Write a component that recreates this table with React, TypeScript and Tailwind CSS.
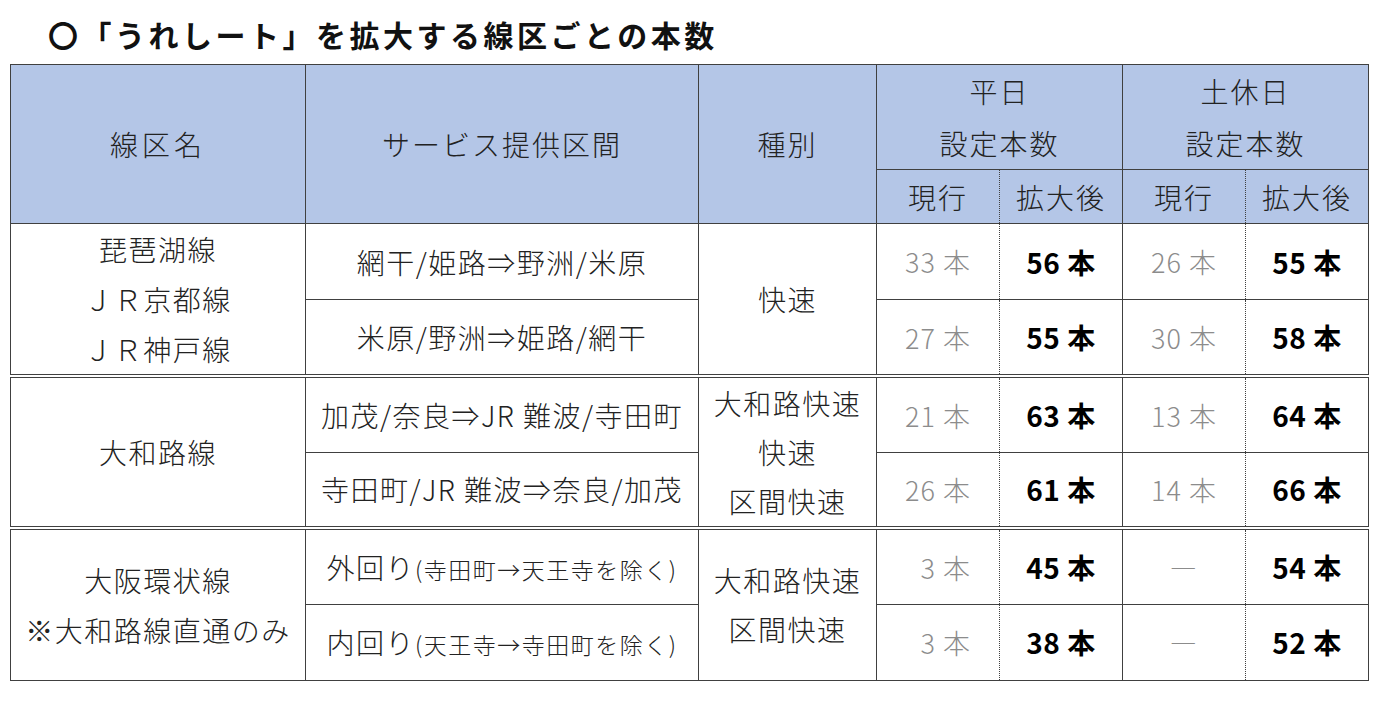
const font = "font-['Noto_Sans_CJK_JP','Noto_Sans',sans-serif]";

const cell = "border border-[#404040] text-center align-middle p-0";
const head = `${cell} bg-[#b4c6e7] font-light text-[#222] text-[28px] tracking-[2px]`;
const body = `${cell} font-light text-[#222] text-[28px] tracking-[1.5px]`;
const dblTop = "border-t-4 [border-top-style:double]";
const dotR = "[border-right-style:dotted]";
const dotL = "[border-left-style:dotted]";

function Now({ v }: { v: string }) {
	const pad = v.length === 1;
	return (
		<span className="text-[#8c8c8c] font-light text-[27px] tracking-[1px]">
			{pad && <span className="invisible">0</span>}
			{v} 本
		</span>
	);
}

function After({ v }: { v: string }) {
	return <span className="text-black font-bold text-[28px] tracking-[0.5px]">{v} 本</span>;
}

function Dash() {
	return <span className="text-[#8c8c8c] font-light text-[27px]">―</span>;
}

type Row = {
	route: React.ReactNode;
	wdNow: React.ReactNode;
	wdAfter: string;
	hdNow: React.ReactNode;
	hdAfter: string;
};

type Group = {
	line: React.ReactNode;
	kind: React.ReactNode;
	rows: [Row, Row];
};

const groups: Group[] = [
	{
		line: (
			<>
				琵琶湖線
				<br />
				ＪＲ京都線
				<br />
				ＪＲ神戸線
			</>
		),
		kind: "快速",
		rows: [
			{ route: "網干/姫路⇒野洲/米原", wdNow: <Now v="33" />, wdAfter: "56", hdNow: <Now v="26" />, hdAfter: "55" },
			{ route: "米原/野洲⇒姫路/網干", wdNow: <Now v="27" />, wdAfter: "55", hdNow: <Now v="30" />, hdAfter: "58" },
		],
	},
	{
		line: "大和路線",
		kind: (
			<>
				大和路快速
				<br />
				快速
				<br />
				区間快速
			</>
		),
		rows: [
			{ route: "加茂/奈良⇒JR 難波/寺田町", wdNow: <Now v="21" />, wdAfter: "63", hdNow: <Now v="13" />, hdAfter: "64" },
			{ route: "寺田町/JR 難波⇒奈良/加茂", wdNow: <Now v="26" />, wdAfter: "61", hdNow: <Now v="14" />, hdAfter: "66" },
		],
	},
	{
		line: (
			<>
				大阪環状線
				<br />
				※大和路線直通のみ
			</>
		),
		kind: (
			<>
				大和路快速
				<br />
				区間快速
			</>
		),
		rows: [
			{
				route: (
					<>
						外回り<span className="text-[23px] tracking-[1.5px]">(寺田町→天王寺を除く)</span>
					</>
				),
				wdNow: <Now v="3" />,
				wdAfter: "45",
				hdNow: <Dash />,
				hdAfter: "54",
			},
			{
				route: (
					<>
						内回り<span className="text-[23px] tracking-[1.5px]">(天王寺→寺田町を除く)</span>
					</>
				),
				wdNow: <Now v="3" />,
				wdAfter: "38",
				hdNow: <Dash />,
				hdAfter: "52",
			},
		],
	},
];

export default function App() {
	return (
		<div className={`${font} w-[1380px] h-[705px] bg-white`}>
			<h1 className="pt-[14px] pl-[48px] h-[64px] text-[30px] leading-[40px] font-bold tracking-[3.5px] text-[#111]">
				〇「うれしート」を拡大する線区ごとの本数
			</h1>

			<table className="ml-[10px] w-[1358px] table-fixed border-collapse">
				<colgroup>
					<col className="w-[295px]" />
					<col className="w-[393px]" />
					<col className="w-[178px]" />
					<col className="w-[123px]" />
					<col className="w-[123px]" />
					<col className="w-[123px]" />
					<col className="w-[123px]" />
				</colgroup>
				<thead>
					<tr className="h-[104px]">
						<th rowSpan={2} className={`${head} tracking-[4px]`}>
							線区名
						</th>
						<th rowSpan={2} className={head}>
							サービス提供区間
						</th>
						<th rowSpan={2} className={head}>
							種別
						</th>
						<th colSpan={2} className={`${head} leading-[52px]`}>
							平日
							<br />
							設定本数
						</th>
						<th colSpan={2} className={`${head} leading-[52px]`}>
							土休日
							<br />
							設定本数
						</th>
					</tr>
					<tr className="h-[54px]">
						<th className={`${head} ${dotR}`}>現行</th>
						<th className={`${head} ${dotL}`}>拡大後</th>
						<th className={`${head} ${dotR}`}>現行</th>
						<th className={`${head} ${dotL}`}>拡大後</th>
					</tr>
				</thead>
				<tbody>
					{groups.map((g, gi) =>
						g.rows.map((r, ri) => {
							const top = gi > 0 && ri === 0 ? dblTop : "";
							return (
								<tr key={`${gi}-${ri}`} className="h-[76px]">
									{ri === 0 && (
										<td rowSpan={2} className={`${body} ${top} leading-[50px]`}>
											{g.line}
										</td>
									)}
									<td className={`${body} ${top}`}>{r.route}</td>
									{ri === 0 && (
										<td rowSpan={2} className={`${body} ${top} leading-[49px]`}>
											{g.kind}
										</td>
									)}
									<td className={`${body} ${top} ${dotR}`}>{r.wdNow}</td>
									<td className={`${body} ${top} ${dotL}`}>
										<After v={r.wdAfter} />
									</td>
									<td className={`${body} ${top} ${dotR}`}>{r.hdNow}</td>
									<td className={`${body} ${top} ${dotL}`}>
										<After v={r.hdAfter} />
									</td>
								</tr>
							);
						})
					)}
				</tbody>
			</table>
		</div>
	);
}
